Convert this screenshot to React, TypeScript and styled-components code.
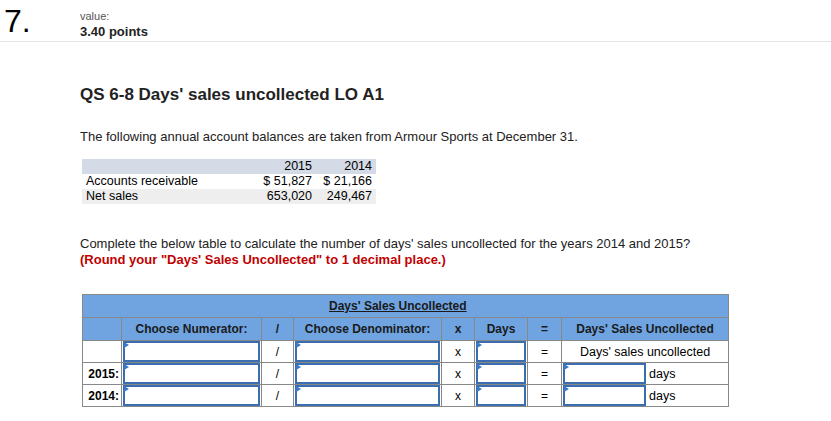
import React from 'react'
import styled, { createGlobalStyle } from 'styled-components'

const Global = createGlobalStyle`
  body { margin: 0; background: #fff; font-family: "Liberation Sans", Arial, sans-serif; color: #000; }
`

const Header = styled.div`
  display: flex;
  height: 41px;
  border-bottom: 1px solid #e4e4e4;
`
const Number = styled.div`
  width: 80px;
  font-size: 32px;
  padding: 3px 0 0 4px;
  box-sizing: border-box;
`
const Value = styled.div`
  padding-top: 10px;
  font-size: 11px;
  color: #555;
  b { display: block; font-size: 13px; color: #222; margin-top: 2px; }
`
const Body = styled.div`
  padding-left: 80px;
`
const Title = styled.h1`
  font-size: 17px;
  font-weight: bold;
  margin: 43px 0 0;
  color: #222;
`
const Text = styled.p<{ $top: number }>`
  font-size: 13px;
  margin: ${p => p.$top}px 0 0;
  line-height: 16px;
  color: #222;
`
const Red = styled.span`
  color: #c00000;
  font-weight: bold;
`
const Balances = styled.table`
  margin: 14px 0 0 2px;
  border-collapse: collapse;
  font-size: 12.5px;
  width: 294px;
  td { padding: 0 4px; line-height: 15px; }
`
const BalRow = styled.tr<{ $bg: string }>`
  background: ${p => p.$bg};
  td:not(:first-child) { text-align: right; }
  td:last-child { width: 52px; }
`
const Grid = styled.table`
  margin: 26px 0 0 2px;
  border-collapse: collapse;
  font-size: 12px;
  width: 646px;
  table-layout: fixed;
  td { border: 1px solid #888; height: 21px; padding: 0; text-align: center; }
`
const Col = styled.col<{ $w: number }>`
  width: ${p => p.$w}px;
`
const HeadRow = styled.tr`
  background: #6fa4e1;
  font-weight: bold;
  height: 23px;
  td { color: #1a1a1a; }
`
const Caption = styled.td`
  && { text-align: left; padding-left: 246px; }
`
const Label = styled.td`
  && { text-align: right; font-weight: bold; padding-right: 2px; }
`
const Input = styled.div<{ $w?: string }>`
  position: relative;
  width: ${p => p.$w || 'auto'};
  margin: 0 1px;
  border: 2px solid #3a6eb0;
  box-sizing: border-box;
  height: 21px;
  background: #fff;
  &::before {
    content: '';
    position: absolute;
    left: -1px; top: -1px;
    border-left: 5px solid #3a78c8;
    border-top: 3px solid transparent;
    border-bottom: 3px solid transparent;
  }
`
const Result = styled.div`
  display: flex;
  align-items: center;
  text-align: left;
  span { padding-left: 2px; font-size: 12.5px; }
`
const Note = styled.span`
  font-size: 12.5px;
`

const widths = [39, 140, 32, 148, 33, 53, 34, 167]

const Row = ({ label }: { label?: string }) => (
  <tr>
    <Label>{label}</Label>
    <td><Input /></td>
    <td>/</td>
    <td><Input /></td>
    <td>x</td>
    <td><Input /></td>
    <td>=</td>
    <td>
      {label ? (
        <Result><Input $w="83px" /><span>days</span></Result>
      ) : (
        <Note>Days' sales uncollected</Note>
      )}
    </td>
  </tr>
)

export default function App() {
  return (
    <>
      <Global />
      <Header>
        <Number>7.</Number>
        <Value>value:<b>3.40 points</b></Value>
      </Header>
      <Body>
        <Title>QS 6-8 Days' sales uncollected LO A1</Title>
        <Text $top={24}>The following annual account balances are taken from Armour Sports at December 31.</Text>
        <Balances>
          <tbody>
            <BalRow $bg="#d5dbe6"><td></td><td>2015</td><td>2014</td></BalRow>
            <BalRow $bg="#fff"><td>Accounts receivable</td><td>$ 51,827</td><td>$ 21,166</td></BalRow>
            <BalRow $bg="#eeeeee"><td>Net sales</td><td>653,020</td><td>249,467</td></BalRow>
          </tbody>
        </Balances>
        <Text $top={32}>
          Complete the below table to calculate the number of days' sales uncollected for the years 2014 and 2015?<br />
          <Red>(Round your "Days' Sales Uncollected" to 1 decimal place.)</Red>
        </Text>
        <Grid>
          <colgroup>
            {widths.map((w, i) => <Col key={i} $w={w} />)}
          </colgroup>
          <tbody>
            <HeadRow>
              <Caption colSpan={8}><u>Days' Sales Uncollected</u></Caption>
            </HeadRow>
            <HeadRow>
              <td></td><td>Choose Numerator:</td><td>/</td><td>Choose Denominator:</td>
              <td>x</td><td>Days</td><td>=</td><td>Days' Sales Uncollected</td>
            </HeadRow>
            <Row />
            <Row label="2015:" />
            <Row label="2014:" />
          </tbody>
        </Grid>
      </Body>
    </>
  )
}
